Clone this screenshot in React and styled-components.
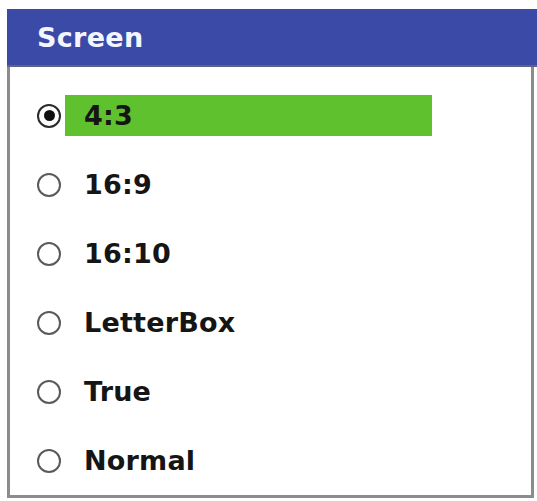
import React from 'react';
import styled, { createGlobalStyle } from 'styled-components';

const GlobalStyle = createGlobalStyle`
  body {
    margin: 0;
    background: #ffffff;
  }
`;

const Window = styled.div`
  margin: 9px 0 0 7px;
  width: 530px;
  font-family: 'DejaVu Sans', 'Liberation Sans', sans-serif;
  font-weight: bold;
`;

const Header = styled.div`
  height: 56px;
  background: #3b4aa6;
  border-bottom: 2px solid #5f6384;
  display: flex;
  align-items: center;
  padding-left: 30px;
  color: #f4f6ff;
  font-size: 27px;
  letter-spacing: 0.3px;
`;

const Body = styled.div`
  box-sizing: border-box;
  width: 527px;
  height: 431px;
  border: 3px solid #8c8c8c;
  border-top: none;
  padding-top: 14px;
`;

const Row = styled.div`
  height: 69px;
  display: flex;
  align-items: center;
  padding-left: 27px;
`;

const Radio = styled.span`
  box-sizing: border-box;
  width: 24px;
  height: 24px;
  border-radius: 50%;
  border: 2px solid ${(p) => (p.checked ? '#2a2a2a' : '#5a5a5a')};
  display: flex;
  align-items: center;
  justify-content: center;
  &::after {
    content: '';
    width: 11px;
    height: 11px;
    border-radius: 50%;
    background: #111;
    display: ${(p) => (p.checked ? 'block' : 'none')};
  }
`;

const Label = styled.div`
  margin-left: 4px;
  width: 367px;
  height: 41px;
  display: flex;
  align-items: center;
  padding-left: 19px;
  box-sizing: border-box;
  background: ${(p) => (p.selected ? '#5fc12d' : 'transparent')};
  color: #151515;
  font-size: 27px;
  letter-spacing: 0.2px;
`;

const options = ['4:3', '16:9', '16:10', 'LetterBox', 'True', 'Normal'];

const App = () => {
  const current = '4:3';
  return (
    <>
      <GlobalStyle />
      <Window>
        <Header>Screen</Header>
        <Body>
          {options.map((opt) => (
            <Row key={opt}>
              <Radio checked={opt === current} />
              <Label selected={opt === current}>{opt}</Label>
            </Row>
          ))}
        </Body>
      </Window>
    </>
  );
};

export default App;
